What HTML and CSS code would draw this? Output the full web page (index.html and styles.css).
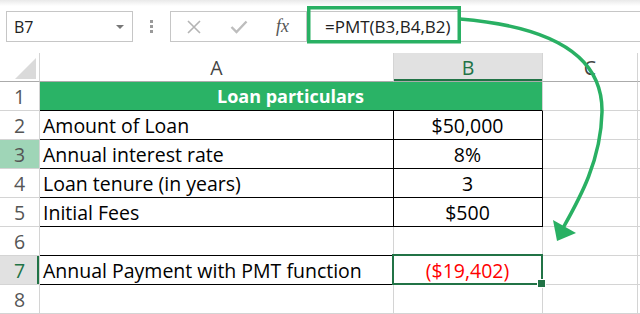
FILE: index.html
```html
<!DOCTYPE html>
<html lang="en">
<head>
    <meta charset="UTF-8">
    <title>PMT function example</title>
    <link rel="stylesheet" href="styles.css">
</head>
<body>
    <div class="toolbar">
        <div class="name-box">
            <span>B7</span>
            <span class="name-arrow"></span>
        </div>
        <div class="grip"><i></i><i></i><i></i></div>
        <div class="fx-buttons">
            <svg class="btn-icon" width="16" height="16" viewBox="0 0 16 16">
                <path d="M2 2 L14 14 M14 2 L2 14" stroke="#b4b4b4" stroke-width="1.6" fill="none"/>
            </svg>
            <svg class="btn-icon" width="18" height="16" viewBox="0 0 18 16">
                <path d="M1.5 8 L6.5 13 L16.5 2.5" stroke="#bdbdbd" stroke-width="2.4" fill="none"/>
            </svg>
            <span class="fx">fx</span>
        </div>
        <div class="formula-bar">
            <span class="formula">=PMT(B3,B4,B2)</span>
        </div>
    </div>

    <div class="sheet">
        <div class="corner"><span class="corner-tri"></span></div>
        <div class="col-head">A</div>
        <div class="col-head active">B</div>
        <div class="col-head">C</div>
        <div class="col-head"></div>

        <div class="row-head">1</div>
        <div class="cell title">Loan particulars</div>
        <div class="cell"></div>
        <div class="cell"></div>

        <div class="row-head">2</div>
        <div class="cell boxed">Amount of Loan</div>
        <div class="cell boxed num">$50,000</div>
        <div class="cell"></div>
        <div class="cell"></div>

        <div class="row-head picked">3</div>
        <div class="cell boxed">Annual interest rate</div>
        <div class="cell boxed num">8%</div>
        <div class="cell"></div>
        <div class="cell"></div>

        <div class="row-head">4</div>
        <div class="cell boxed">Loan tenure (in years)</div>
        <div class="cell boxed num">3</div>
        <div class="cell"></div>
        <div class="cell"></div>

        <div class="row-head">5</div>
        <div class="cell boxed">Initial Fees</div>
        <div class="cell boxed num">$500</div>
        <div class="cell"></div>
        <div class="cell"></div>

        <div class="row-head">6</div>
        <div class="cell under"></div>
        <div class="cell"></div>
        <div class="cell"></div>
        <div class="cell"></div>

        <div class="row-head active">7</div>
        <div class="cell boxed">Annual Payment with PMT function</div>
        <div class="cell num negative selected">($19,402)</div>
        <div class="cell"></div>
        <div class="cell"></div>

        <div class="row-head">8</div>
        <div class="cell"></div>
        <div class="cell"></div>
        <div class="cell"></div>
        <div class="cell"></div>
    </div>

    <svg class="callout" width="640" height="314" viewBox="0 0 640 314">
        <rect x="308.75" y="7.75" width="150.5" height="34" fill="none" stroke="#29b063" stroke-width="3.5"/>
        <path d="M460 19 C545 26 603 52 602 112 C601 160 580 198 563 228" fill="none" stroke="#29b063" stroke-width="3.5"/>
        <polygon points="557,241 553,220 576,233" fill="#29b063"/>
    </svg>
</body>
</html>
```

FILE: styles.css
```css
* {
    box-sizing: border-box;
    margin: 0;
    padding: 0;
}

body {
    width: 640px;
    height: 314px;
    overflow: hidden;
    position: relative;
    font-family: 'Open Sans', 'Lato', sans-serif;
    background: #ffffff;
    color: #000;
}

/* formula toolbar */
.toolbar {
    height: 53px;
    display: flex;
    align-items: flex-start;
    padding-top: 11px;
    background: linear-gradient(#e9e9e9, #ffffff 6px);
}

.name-box {
    width: 127px;
    height: 31px;
    margin-left: 6px;
    border: 1px solid #c6c6c6;
    background: #fff;
    display: flex;
    align-items: center;
    justify-content: space-between;
    padding: 0 8px 0 7px;
    font-size: 16px;
    color: #222;
}

.name-arrow {
    width: 0;
    height: 0;
    border-left: 4px solid transparent;
    border-right: 4px solid transparent;
    border-top: 4px solid #777;
}

.grip {
    width: 37px;
    height: 31px;
    display: flex;
    flex-direction: column;
    align-items: center;
    justify-content: center;
    gap: 2px;
}

.grip i {
    width: 3px;
    height: 3px;
    background: #9a9a9a;
}

.fx-buttons {
    width: 137px;
    height: 31px;
    border: 1px solid #c6c6c6;
    display: flex;
    align-items: center;
    padding-left: 15px;
    gap: 28px;
}

.btn-icon {
    display: block;
}

.fx {
    font-family: 'Liberation Serif', serif;
    font-style: italic;
    font-size: 18px;
    color: #555;
    margin-left: 0;
}

.formula-bar {
    flex: 1;
    height: 31px;
    border-top: 1px solid #c6c6c6;
    border-bottom: 1px solid #c6c6c6;
    display: flex;
    align-items: center;
    padding-left: 18px;
}

.formula {
    font-size: 17px;
    color: #222;
}

/* sheet grid */
.sheet {
    display: grid;
    grid-template-columns: 40px 354px 149px 95px 1fr;
    grid-auto-rows: 29px;
    font-size: 19.5px;
}

.sheet > div {
    border-right: 1px solid #d4d4d4;
    border-bottom: 1px solid #d4d4d4;
    display: flex;
    align-items: center;
    white-space: nowrap;
}

.corner {
    position: relative;
    border-bottom-color: #ababab !important;
}

.corner-tri {
    position: absolute;
    right: 3px;
    bottom: 2px;
    width: 21px;
    height: 21px;
    background: #dadada;
    clip-path: polygon(100% 0, 100% 100%, 0 100%);
}

.col-head {
    justify-content: center;
    color: #444;
    border-bottom-color: #ababab !important;
}

.col-head.active {
    background: #e1e1e1;
    color: #217346;
    box-shadow: inset 0 -2px 0 #217346;
}

.row-head {
    justify-content: center;
    color: #555;
}

.row-head.picked {
    background: #9fd5b7;
}

.row-head.active {
    background: #e1e1e1;
    color: #217346;
    box-shadow: inset -2px 0 0 #217346;
}

.cell {
    padding: 0 4px 0 3px;
}

.cell.title {
    grid-column: span 2;
    justify-content: center;
    background: #2ab366;
    color: #fff;
    font-size: 18px;
    font-weight: 700;
    border-bottom-color: #000 !important;
}

.cell.boxed {
    border-right-color: #000 !important;
    border-bottom-color: #000 !important;
}

.cell.under {
    border-bottom-color: #000 !important;
}

.cell.num {
    justify-content: center;
}

.cell.negative {
    color: #ff0000;
}

.cell.selected {
    position: relative;
}

.cell.selected::after {
    content: "";
    position: absolute;
    left: -2px;
    top: -2px;
    right: -1px;
    bottom: -1px;
    border: 2px solid #217346;
}

.cell.selected::before {
    content: "";
    position: absolute;
    right: -4px;
    bottom: -4px;
    width: 7px;
    height: 7px;
    background: #217346;
    border: 1px solid #fff;
    z-index: 1;
}

/* annotation overlay */
.callout {
    position: absolute;
    left: 0;
    top: 0;
    pointer-events: none;
}
```
